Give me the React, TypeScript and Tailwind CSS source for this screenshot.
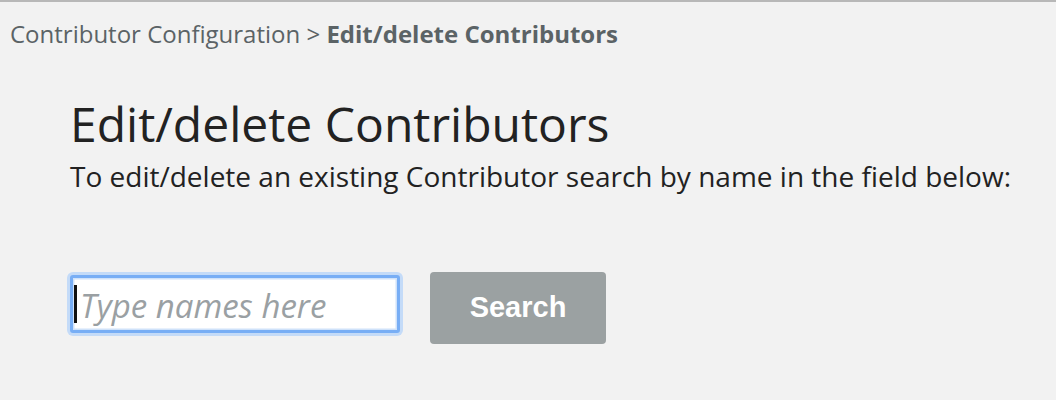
import React from "react";

export default function App() {
  return (
    <div className="w-[1056px] h-[400px] bg-[#f2f2f2] border-t-2 border-[#b8b8b8] overflow-hidden" style={{ fontFamily: '"Open Sans", sans-serif' }}>
      <div className="pl-[10px] pt-[16px] text-[24px] leading-[32px] text-[#5b6366]">
        Contributor Configuration &gt; <span className="font-bold">Edit/delete Contributors</span>
      </div>
      <div className="pl-[70px] pt-[46px]">
        <h1 className="text-[48px] leading-[56px] text-[#222]">Edit/delete Contributors</h1>
        <p className="mt-[6px] text-[28px] leading-[36px] text-[#222]">To edit/delete an existing Contributor search by name in the field below:</p>
        <div className="flex items-start gap-[30px] mt-[78px]">
          <div className="mt-[3px] w-[330px] h-[58px] rounded-[3px] border-[3px] border-[#78aef5] ring-[3px] ring-[#c4dbf8] shadow-[inset_0_0_0_1.5px_#cfe2fa] bg-white flex items-center pl-[1px] pt-[4px]">
            <div className="w-[3px] h-[38px] bg-[#111] -mt-[4px]" />
            <span className="italic text-[33px] text-[#9aa0a3] pl-[3px]">Type names here</span>
          </div>
          <button className="w-[176px] h-[72px] rounded-[4px] bg-[#9ba1a2] text-white font-bold text-[29px]" style={{ fontFamily: '"Liberation Sans", Arial, sans-serif' }}>
            Search
          </button>
        </div>
      </div>
    </div>
  );
}
